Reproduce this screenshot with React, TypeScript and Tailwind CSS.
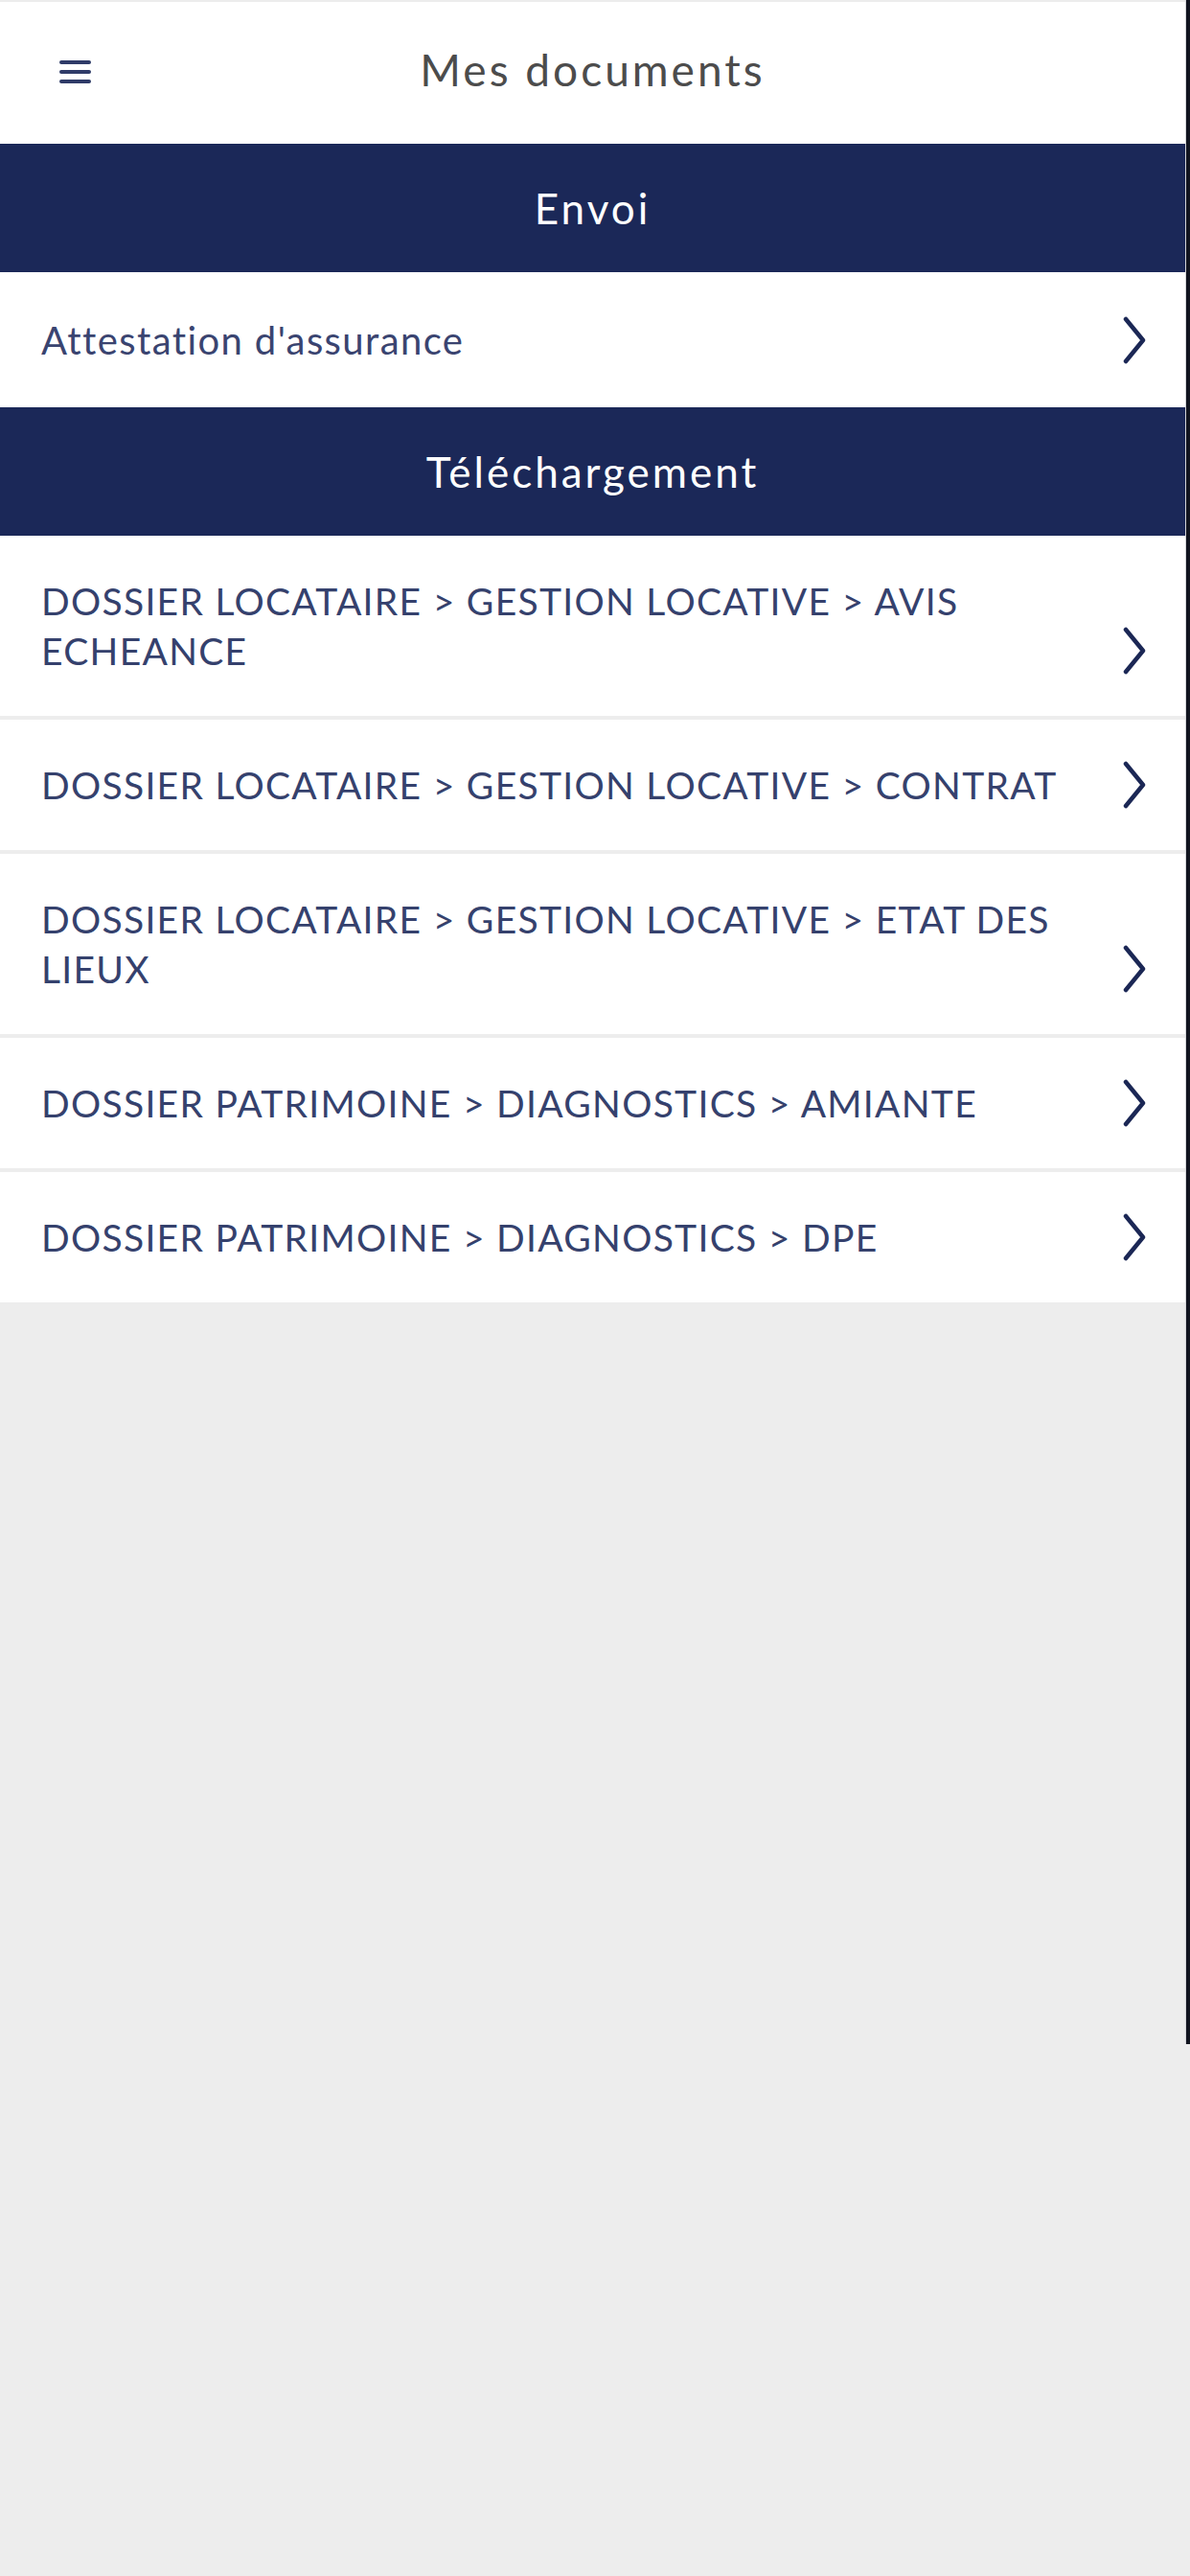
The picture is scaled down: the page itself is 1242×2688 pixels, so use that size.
import React from 'react';

const font = { fontFamily: 'Lato, "Open Sans", sans-serif' };

const envoi = ["Attestation d'assurance"];

const downloads = [
  'DOSSIER LOCATAIRE > GESTION LOCATIVE > AVIS ECHEANCE',
  'DOSSIER LOCATAIRE > GESTION LOCATIVE > CONTRAT',
  'DOSSIER LOCATAIRE > GESTION LOCATIVE > ETAT DES LIEUX',
  'DOSSIER PATRIMOINE > DIAGNOSTICS > AMIANTE',
  'DOSSIER PATRIMOINE > DIAGNOSTICS > DPE',
];

const Chevron = () => (
  <svg width="26" height="50" viewBox="0 0 26 50" fill="none">
    <path d="M4 3 L22 25 L4 47" stroke="#1b2755" strokeWidth="4.5" strokeLinecap="round" strokeLinejoin="round" />
  </svg>
);

const SectionBar = ({ label }: { label: string }) => (
  <div className="h-[134px] bg-[#1b2858] flex items-center justify-center">
    <span className="text-white text-[44px] tracking-[3px] leading-none">{label}</span>
  </div>
);

const Row = ({ label }: { label: string }) => (
  <div className="bg-white flex items-end justify-between pl-[43px] pr-[40px] py-[42px] mb-[4px] last:mb-0">
    <span className="text-[#35416d] text-[39px] tracking-[1.3px] leading-[52px] max-w-[1110px]">{label}</span>
    <div className="h-[52px] flex items-center shrink-0">
      <Chevron />
    </div>
  </div>
);

export default function App() {
  return (
    <div className="w-[1242px] min-h-[2688px] bg-[#ededed]" style={font}>
      <div className="flex">
        <div className="w-[1237px] h-[2133px] bg-[#ededed]">
          {/* header */}
          <div className="h-[150px] bg-white border-t-2 border-[#ececec] relative flex items-center justify-center pb-[6px]">
            <div className="absolute left-[62px] top-[61px] flex flex-col gap-[6px]">
              <div className="w-[33px] h-[4px] rounded-full bg-[#2f3b68]" />
              <div className="w-[33px] h-[4px] rounded-full bg-[#2f3b68]" />
              <div className="w-[33px] h-[4px] rounded-full bg-[#2f3b68]" />
            </div>
            <span className="text-[#4c4c4c] text-[46px] tracking-[3px] leading-none">Mes documents</span>
          </div>

          <SectionBar label="Envoi" />
          <div className="bg-white h-[141px] flex items-center justify-between pl-[43px] pr-[40px]">
            <span className="text-[#3a4470] text-[40px] tracking-[1.4px]">{envoi[0]}</span>
            <Chevron />
          </div>

          <SectionBar label="Téléchargement" />
          <div>
            {downloads.map((d) => (
              <Row key={d} label={d} />
            ))}
          </div>
        </div>
        <div className="w-[1px] h-[2133px] bg-[#d4d4d8]" />
        <div className="w-[4px] h-[2133px] bg-[#11141f]" />
      </div>
    </div>
  );
}
